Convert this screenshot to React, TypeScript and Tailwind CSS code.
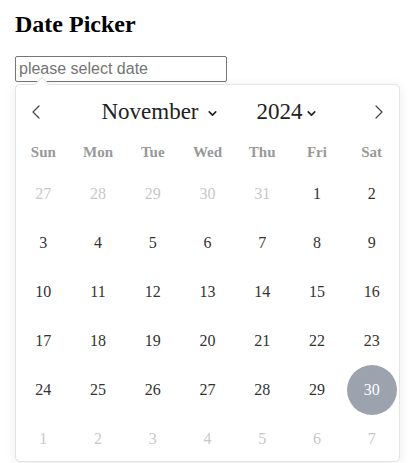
import { ChevronLeft, ChevronRight, ChevronDown } from "lucide-react";

type Day = { n: number; muted?: boolean; selected?: boolean };

const weekdays = ["Sun", "Mon", "Tue", "Wed", "Thu", "Fri", "Sat"];

function buildDays(): Day[] {
  const days: Day[] = [];
  for (const n of [27, 28, 29, 30, 31]) days.push({ n, muted: true });
  for (let n = 1; n <= 30; n++) days.push({ n, selected: n === 30 });
  for (let n = 1; n <= 7; n++) days.push({ n, muted: true });
  return days;
}

export default function App() {
  const days = buildDays();

  return (
    <div className="min-h-screen bg-white px-[15px] font-['Liberation_Serif',serif]">
      <h2 className="pt-[10px] text-[24px] leading-[28px] font-bold text-black">
        Date Picker
      </h2>

      {/* Input */}
      <input
        type="text"
        placeholder="please select date"
        className="mt-[18px] block h-[26px] w-[212px] rounded-[2px] border border-[#767676] px-[3px] font-['Liberation_Sans',Arial,sans-serif] text-[16px] text-black placeholder:text-[#757575] outline-none"
      />

      {/* Popup */}
      <div className="relative mt-[2px] w-[385px]">
        <div className="absolute left-[22px] top-[-5px] z-10 h-[10px] w-[10px] rotate-45 border-l border-t border-[#e4e4e4] bg-white"></div>
        <div className="h-[378px] overflow-hidden rounded-[5px] border border-[#e4e4e4] bg-white shadow-[0_2px_12px_rgba(0,0,0,0.08)]">
          {/* Header */}
          <div className="flex h-[54px] items-center justify-between px-[8px]">
            <ChevronLeft className="h-[24px] w-[24px] text-[#444]" strokeWidth={1.2} />
            <div className="flex items-center gap-[38px] pl-[4px] text-[23px] text-[#222]">
              <div className="flex items-center gap-[7px]">
                <span>November</span>
                <ChevronDown className="mt-[2px] h-[13px] w-[13px]" strokeWidth={3} />
              </div>
              <div className="flex items-center gap-[2px]">
                <span>2024</span>
                <ChevronDown className="mt-[2px] h-[13px] w-[13px]" strokeWidth={3} />
              </div>
            </div>
            <ChevronRight className="h-[24px] w-[24px] text-[#444]" strokeWidth={1.2} />
          </div>

          {/* Weekdays */}
          <div className="grid h-[26px] grid-cols-7 items-center text-center text-[15px] font-bold text-[#999]">
            {weekdays.map((w) => (
              <div key={w}>{w}</div>
            ))}
          </div>

          {/* Days */}
          <div className="grid grid-cols-7 pt-[4px] text-[16px]">
            {days.map((d, i) => (
              <div key={i} className="flex h-[49px] items-center justify-center">
                {d.selected ? (
                  <div className="flex h-[50px] w-[50px] shrink-0 items-center justify-center rounded-full bg-[#9ca3af] text-white">
                    {d.n}
                  </div>
                ) : (
                  <span className={d.muted ? "text-[#c8c8c8]" : "text-[#333]"}>{d.n}</span>
                )}
              </div>
            ))}
          </div>
        </div>
      </div>
    </div>
  );
}
